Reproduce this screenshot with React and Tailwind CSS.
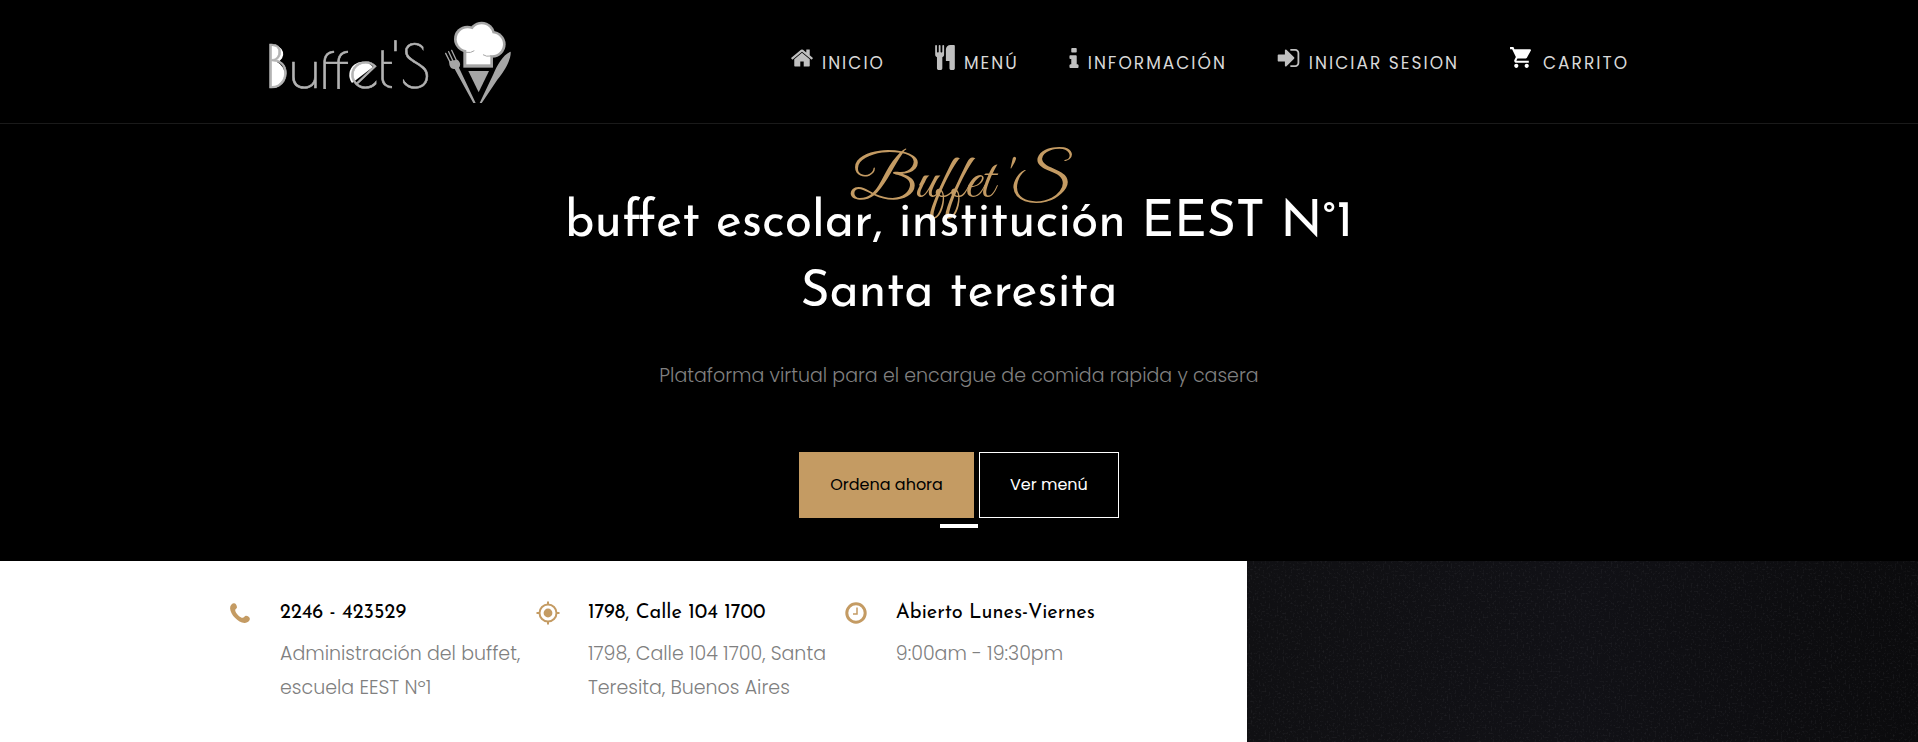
import { MdShoppingCart } from "react-icons/md";

const sans = "font-[Poppins,Inter,sans-serif]";
const display = "font-['Josefin_Sans',Lato,sans-serif]";

function Logo() {
  return (
    <svg viewBox="-4 0 250 83" className="h-[83px] w-[250px]" role="img" aria-label="Buffet'S">
      <path d="M3 26h3a8 8 0 0 1 4 16a14 14 0 0 1-2 26H3z" fill="#fff" />
      <path d="M85 63a13 13 0 0 1 21-16z" fill="#fff" />
      <text
        x="-2"
        y="68"
        fill="#b3b3b3"
        stroke="#b3b3b3"
        strokeWidth=".6"
        className="font-['Poiret_One',Lato,sans-serif] text-[59px]"
      >
        Buffet'S
      </text>
      <g transform="translate(172 -5) scale(.3333)">
        <g fill="#a6a6a6">
          <circle cx="85" cy="72" r="40" />
          <circle cx="128" cy="60" r="40" />
          <circle cx="160" cy="88" r="40" />
          <path d="M73 95h89v63H73z" />
        </g>
        <g fill="#fff">
          <circle cx="86" cy="73" r="33" />
          <circle cx="128" cy="61" r="33" />
          <circle cx="159" cy="88" r="33" />
          <path d="M82 90h72v58H82z" />
        </g>
        <path d="M80 112q16 3 26-5M156 123q-14 3-24-4" fill="none" stroke="#a6a6a6" strokeWidth="3" />
        <g fill="#a6a6a6">
          <path d="M88 168h62l-31 64z" />
          <path d="M215 110c2 18-12 50-40 84l-48 72-5-2 41-86c10-26 30-60 52-68z" />
          <path d="M31 138c-2 16 6 26 16 24l57 104 6-2-50-106c6-8 4-18-5-24z" />
        </g>
        <path d="M20 115l14 28M29 110l14 30M38 106l14 30" stroke="#a6a6a6" strokeWidth="4" strokeLinecap="round" />
      </g>
    </svg>
  );
}

const navItems = [
  {
    label: "INICIO",
    icon: (
      <svg viewBox="76 253 1640 1283" className="h-[18px] w-[22px] fill-[#c0c0c0]" aria-hidden="true">
        <path d="M1472 992v480q0 26-19 45t-45 19h-384v-384h-256v384h-384q-26 0-45-19t-19-45v-480q0-1 .5-3t.5-3l575-474 575 474q1 2 1 6zm223-69l-62 74q-8 9-21 11h-3q-13 0-21-7l-692-577-692 577q-12 8-24 7-13-2-21-11l-62-74q-8-10-7-23.5t11-21.5l719-599q32-26 76-26t76 26l244 204v-195q0-14 9-23t23-9h192q14 0 23 9t9 23v408l219 182q10 8 11 21.5t-7 23.5z" />
      </svg>
    ),
  },
  {
    label: "MENÚ",
    icon: (
      <svg viewBox="192 0 1408 1792" className="h-[25px] w-[20px] fill-[#c0c0c0]" aria-hidden="true">
        <path d="M832 64v640q0 61-35.5 111t-92.5 70v779q0 52-38 90t-90 38h-128q-52 0-90-38t-38-90v-779q-57-20-92.5-70t-35.5-111v-640q0-26 19-45t45-19 45 19 19 45v416q0 26 19 45t45 19 45-19 19-45v-416q0-26 19-45t45-19 45 19 19 45v416q0 26 19 45t45 19 45-19 19-45v-416q0-26 19-45t45-19 45 19 19 45zm768 0v1600q0 52-38 90t-90 38h-128q-52 0-90-38t-38-90v-512h-224q-13 0-22.5-9.5t-9.5-22.5v-800q0-132 94-226t226-94h256q26 0 45 19t19 45z" />
      </svg>
    ),
  },
  {
    label: "INFORMACIÓN",
    icon: (
      <svg viewBox="576 128 640 1408" className="h-[20px] w-[10px] fill-[#c0c0c0]" aria-hidden="true">
        <path d="M1216 1344v128q0 26-19 45t-45 19h-512q-26 0-45-19t-19-45v-128q0-26 19-45t45-19h64v-384h-64q-26 0-45-19t-19-45v-128q0-26 19-45t45-19h384q26 0 45 19t19 45v576h64q26 0 45 19t19 45zm-128-1152v192q0 26-19 45t-45 19h-256q-26 0-45-19t-19-45v-192q0-26 19-45t45-19h256q26 0 45 19t19 45z" />
      </svg>
    ),
  },
  {
    label: "INICIAR SESION",
    icon: (
      <svg viewBox="128 256 1536 1280" className="h-[18px] w-[23px] fill-[#c0c0c0]" aria-hidden="true">
        <path d="M1312 896q0 26-19 45l-544 544q-19 19-45 19t-45-19-19-45v-288h-448q-26 0-45-19t-19-45v-384q0-26 19-45t45-19h448v-288q0-26 19-45t45-19 45 19l544 544q19 19 19 45zm352-352v704q0 119-84.5 203.5t-203.5 84.5h-320q-13 0-22.5-9.5t-9.5-22.5q0-4-1-20t-.5-26.5 3-23.5 10-19.5 20.5-6.5h320q66 0 113-47t47-113v-704q0-66-47-113t-113-47h-312l-11.5-1-11.5-3-8-5.5-7-9-2-13.5q0-4-1-20t-.5-26.5 3-23.5 10-19.5 20.5-6.5h320q119 0 203.5 84.5t84.5 203.5z" />
      </svg>
    ),
  },
  { label: "CARRITO", icon: <MdShoppingCart size={25} className="text-white" aria-hidden="true" /> },
];

const contacts = [
  {
    title: "2246 - 423529",
    text: "Administración del buffet, escuela EEST Nº1",
    icon: (
      <svg viewBox="0 0 20 20" className="h-5 w-5 fill-[#c49b63]" aria-hidden="true">
        <path d="M3.600.3C5.500-.1 6.800 2.200 7 4.200c.1 1.500-1.700 1.800-1.800 2.900-.1 2.700 5 8 7.800 7.700 1.200-.2 1.600-2 3-2 1.900.1 4 1.600 3.900 3.300-.2 2.300-2.900 4-5.400 3.800C8 19.400.4 11.500.1 5.400 0 2.800 1.600.7 3.600.3z" />
      </svg>
    ),
  },
  {
    title: "1798, Calle 104 1700",
    text: "1798, Calle 104 1700, Santa Teresita, Buenos Aires",
    icon: (
      <svg viewBox="0 0 24 24" className="h-6 w-6" aria-hidden="true">
        <circle cx="12" cy="12" r="8.5" fill="none" stroke="#c49b63" strokeWidth="2" />
        <circle cx="12" cy="12" r="4.4" fill="#c49b63" />
        <path d="M12 .5v3M12 20.500v3M.5 12h3M20.500 12h3" stroke="#c49b63" strokeWidth="2" />
      </svg>
    ),
  },
  {
    title: "Abierto Lunes-Viernes",
    text: "9:00am - 19:30pm",
    icon: (
      <svg viewBox="0 0 22 22" className="h-[22px] w-[22px]" aria-hidden="true">
        <circle cx="11" cy="11" r="9.200" fill="none" stroke="#c49b63" strokeWidth="3" />
        <path d="M12 5.500v6.500H8" fill="none" stroke="#c49b63" strokeWidth="1.500" />
      </svg>
    ),
  },
];

export default function App() {
  return (
    <div className={`flex min-h-screen flex-col bg-black ${sans}`}>
      <header className="border-b border-[#1a1a1a]">
        <div className="mx-auto flex max-w-[1400px] items-center justify-between py-5 pr-[30px] pl-1">
          <a href="#inicio">
            <Logo />
          </a>
          <nav className="mb-2 flex gap-[50px]">
            {navItems.map((item) => (
              <a
                key={item.label}
                href="#"
                className="flex h-[42px] items-center gap-[9px] text-[17px] leading-5 tracking-[2px] text-[#d9d9d9]"
              >
                {item.icon}
                <span className="pt-[10px]">{item.label}</span>
              </a>
            ))}
          </nav>
        </div>
      </header>

      <main className="flex flex-1 flex-col">
        <section className="flex flex-col items-center px-6 pt-[29px] pb-[33px] text-center">
          <span className="font-['Great_Vibes','Liberation_Serif',serif] text-[62px] leading-[60px] text-[#c49b63]">
            Buffet 'S
          </span>
          <h1 className={`-mt-6 max-w-[820px] text-[50px] leading-[70px] text-white ${display}`}>
            buffet escolar, institución EEST N°1 Santa teresita
          </h1>
          <p className="mt-[29px] text-[19px] leading-9 font-light text-[#808080]">
            Plataforma virtual para el encargue de comida rapida y casera
          </p>
          <div className="mt-[58px] flex gap-[5px] text-base">
            <button className="h-[66px] border border-[#c49b63] bg-[#c49b63] px-[30px] text-black">Ordena ahora</button>
            <button className="h-[66px] border border-white px-[30px] text-white">Ver menú</button>
          </div>
          <button aria-label="1" className="mt-[6px] h-1 w-[38px] bg-white" />
        </section>

        <section className="flex flex-1">
          <div className="w-[65%] bg-white pt-10 pr-[95px] pb-[38px] pl-[228px]">
            <div className="grid grid-cols-3">
              {contacts.map((c) => (
                <div key={c.title} className="flex gap-7">
                  <div className="flex h-6 w-6 shrink-0 items-center justify-center">{c.icon}</div>
                  <div>
                    <h3 className={`text-xl leading-6 text-black ${display}`}>{c.title}</h3>
                    <p className="mt-3 text-[19px] leading-[34px] font-light text-[#808080]">{c.text}</p>
                  </div>
                </div>
              ))}
            </div>
          </div>
          <div className="relative flex-1 bg-linear-to-r from-[#101013] via-[#111116] to-[#0b0b0d]">
            <svg className="absolute inset-0 h-full w-full" aria-hidden="true">
              <filter id="grain">
                <feTurbulence type="fractalNoise" baseFrequency=".5" numOctaves="3" seed="4" />
                <feColorMatrix values="0 0 0 0 .5  0 0 0 0 .5  0 0 0 0 .55  1.600 0 0 0 -.85" />
              </filter>
              <rect width="100%" height="100%" filter="url(#grain)" opacity=".18" />
            </svg>
          </div>
        </section>
      </main>
    </div>
  );
}
